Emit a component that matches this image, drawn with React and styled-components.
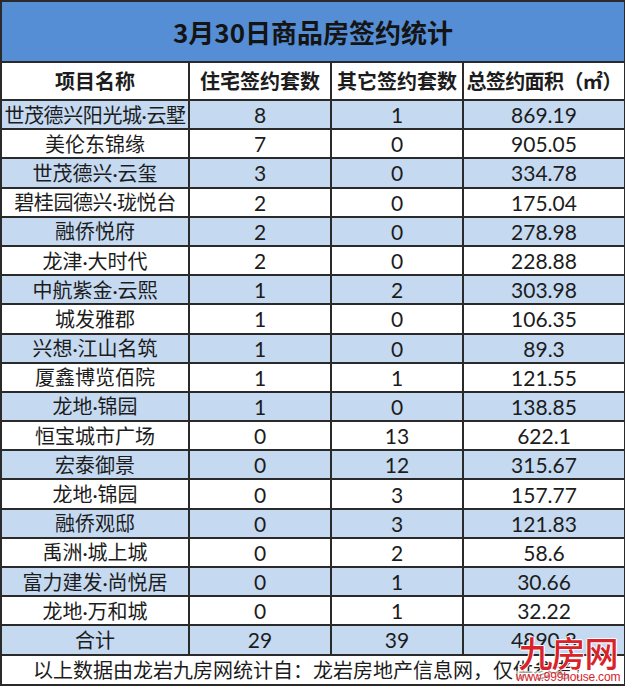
import React from "react";
import styled, { createGlobalStyle } from "styled-components";

const Global = createGlobalStyle`
  html, body { margin: 0; padding: 0; background: #ffffff; }
  body { font-family: "Lato", "Noto Sans CJK SC", sans-serif; }
`;

const Page = styled.div`
  position: relative;
  width: 625px;
  height: 686px;
  overflow: hidden;
`;

const Table = styled.table`
  border-collapse: collapse;
  table-layout: fixed;
  width: 624px;
  color: #1c1c1c;
  font-family: "Lato", "Noto Sans CJK SC", sans-serif;
`;

const Cell = styled.td`
  border: 2px solid #2a2a2a;
  padding: 0;
  text-align: center;
  white-space: nowrap;
  overflow: visible;
  font-size: 20px;
  line-height: 1;
`;

const TitleCell = styled(Cell)`
  height: 59px;
  background: #558ed5;
  font-family: "Noto Sans CJK SC", sans-serif;
  font-weight: 700;
  font-size: 26px;
  color: #141414;
`;

const HeadRow = styled.tr`
  height: 38px;
`;

const HeadCell = styled(Cell)`
  font-family: "Noto Sans CJK SC", sans-serif;
  font-weight: 700;
  font-size: 20px;
  letter-spacing: ${(p) => (p.$tight ? "-0.6px" : "0")};
  background: #ffffff;
`;

const DataRow = styled.tr`
  height: 29.2px;
  background: ${(p) => (p.$shaded ? "#c5d9f1" : "#ffffff")};
`;

const NameCell = styled(Cell)`
  font-size: 20px;
  letter-spacing: ${(p) => (p.$long ? "-0.4px" : "0")};
`;

const NumCell = styled(Cell)`
  font-family: "Lato", sans-serif;
  font-size: 21px;
`;

const FootCell = styled(Cell)`
  height: 28px;
  font-family: "Noto Sans CJK SC", sans-serif;
  font-size: 20px;
  background: #ffffff;
`;

const Watermark = styled.div`
  position: absolute;
  left: 516px;
  top: 634px;
  display: flex;
  flex-direction: column;
  align-items: center;
  color: #d8232a;
  pointer-events: none;
`;

const Logo = styled.div`
  font-family: "Noto Sans CJK SC", sans-serif;
  font-weight: 500;
  font-size: 34px;
  line-height: 36px;
  letter-spacing: -1px;
  transform: scaleY(1.05);
  text-shadow: 1px 0 0 #fff, -1px 0 0 #fff, 0 1px 0 #fff, 0 -1px 0 #fff;
`;

const Site = styled.div`
  font-family: "Liberation Sans", Arial, sans-serif;
  font-size: 12px;
  line-height: 12px;
  letter-spacing: -0.2px;
  margin-top: 1px;
  background: rgba(255, 255, 255, 0.6);
`;

const rows = [
  ["世茂德兴阳光城·云墅", "8", "1", "869.19"],
  ["美伦东锦缘", "7", "0", "905.05"],
  ["世茂德兴·云玺", "3", "0", "334.78"],
  ["碧桂园德兴·珑悦台", "2", "0", "175.04"],
  ["融侨悦府", "2", "0", "278.98"],
  ["龙津·大时代", "2", "0", "228.88"],
  ["中航紫金·云熙", "1", "2", "303.98"],
  ["城发雅郡", "1", "0", "106.35"],
  ["兴想·江山名筑", "1", "0", "89.3"],
  ["厦鑫博览佰院", "1", "1", "121.55"],
  ["龙地·锦园", "1", "0", "138.85"],
  ["恒宝城市广场", "0", "13", "622.1"],
  ["宏泰御景", "0", "12", "315.67"],
  ["龙地·锦园", "0", "3", "157.77"],
  ["融侨观邸", "0", "3", "121.83"],
  ["禹洲·城上城", "0", "2", "58.6"],
  ["富力建发·尚悦居", "0", "1", "30.66"],
  ["龙地·万和城", "0", "1", "32.22"],
  ["合计", "29", "39", "4890.8"],
];

export default function App() {
  return (
    <Page>
      <Global />
      <Table>
        <colgroup>
          <col style={{ width: 188 }} />
          <col style={{ width: 142 }} />
          <col style={{ width: 132 }} />
          <col style={{ width: 162 }} />
        </colgroup>
        <tbody>
          <tr>
            <TitleCell colSpan={4}>3月30日商品房签约统计</TitleCell>
          </tr>
          <HeadRow>
            <HeadCell>项目名称</HeadCell>
            <HeadCell>住宅签约套数</HeadCell>
            <HeadCell>其它签约套数</HeadCell>
            <HeadCell $tight>总签约面积（㎡）</HeadCell>
          </HeadRow>
          {rows.map((r, i) => (
            <DataRow key={i} $shaded={i % 2 === 0}>
              <NameCell $long={r[0].length > 8}>{r[0]}</NameCell>
              <NumCell>{r[1]}</NumCell>
              <NumCell>{r[2]}</NumCell>
              <NumCell>{r[3]}</NumCell>
            </DataRow>
          ))}
          <tr>
            <FootCell colSpan={4}>
              以上数据由龙岩九房网统计自：龙岩房地产信息网，仅供参考！
            </FootCell>
          </tr>
        </tbody>
      </Table>
      <Watermark>
        <Logo>九房网</Logo>
        <Site>www.999house.com</Site>
      </Watermark>
    </Page>
  );
}
